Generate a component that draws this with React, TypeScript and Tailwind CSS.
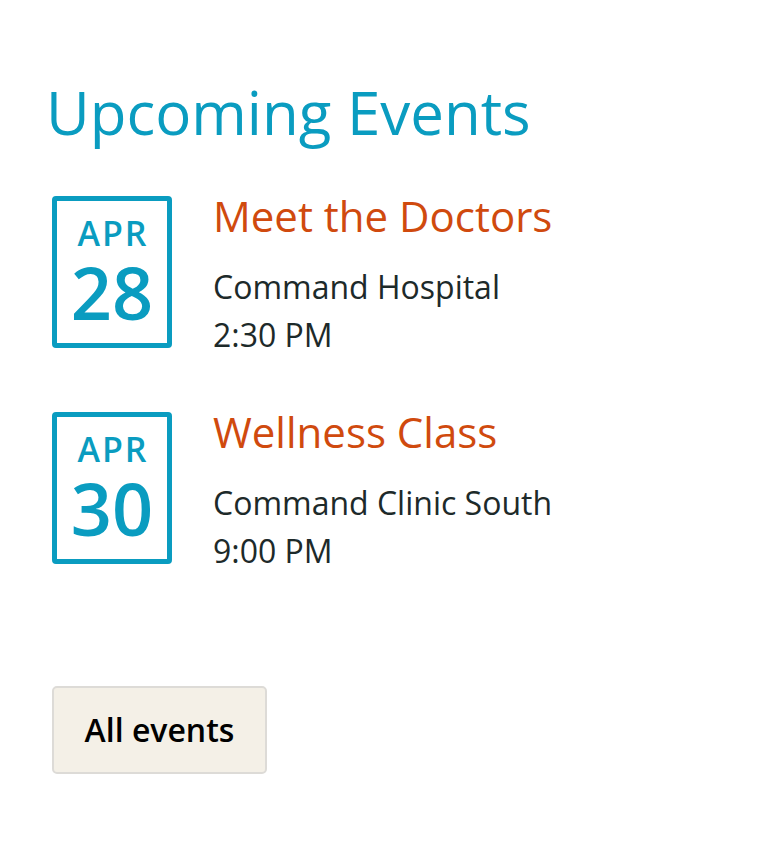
import React from 'react';

const events = [
  { month: 'APR', day: '28', title: 'Meet the Doctors', place: 'Command Hospital', time: '2:30 PM' },
  { month: 'APR', day: '30', title: 'Wellness Class', place: 'Command Clinic South', time: '9:00 PM' },
];

const App: React.FC = () => {
  return (
    <div className="min-h-screen bg-white font-['Open_Sans',sans-serif] pl-[46px] pt-[76px]">
      {/* Heading */}
      <h1 className="text-[60px] leading-[72px] font-normal text-[#0a9cc0]">Upcoming Events</h1>

      {/* Events list */}
      <div className="mt-[48px] pl-[6px] flex flex-col gap-[53px]">
        {events.map((ev) => (
          <div key={ev.day} className="flex items-start gap-[41px]">
            <div className="w-[120px] h-[152px] shrink-0 border-[5px] border-[#0a9cc0] rounded-[4px] flex flex-col items-center pt-[15px] text-[#0a9cc0]">
              <span className="text-[34px] leading-[34px] font-semibold tracking-[2px] pl-[2px]">{ev.month}</span>
              <span className="mt-[6px] text-[72px] leading-[72px] font-semibold">{ev.day}</span>
            </div>
            <div className="-mt-[4px] flex flex-col">
              <h3 className="text-[42px] leading-[48px] font-normal text-[#d04a0e]">{ev.title}</h3>
              <div className="mt-[23px] text-[32px] leading-[48px] text-[#1d2a2a]">
                <p>{ev.place}</p>
                <p>{ev.time}</p>
              </div>
            </div>
          </div>
        ))}
      </div>

      {/* Button */}
      <button className="mt-[111px] ml-[6px] w-[215px] h-[88px] flex items-center justify-center bg-[#f4f0e7] border-2 border-[#dddbd7] rounded-[5px] text-[32px] font-semibold text-black">
        All events
      </button>
    </div>
  );
};

export default App;
